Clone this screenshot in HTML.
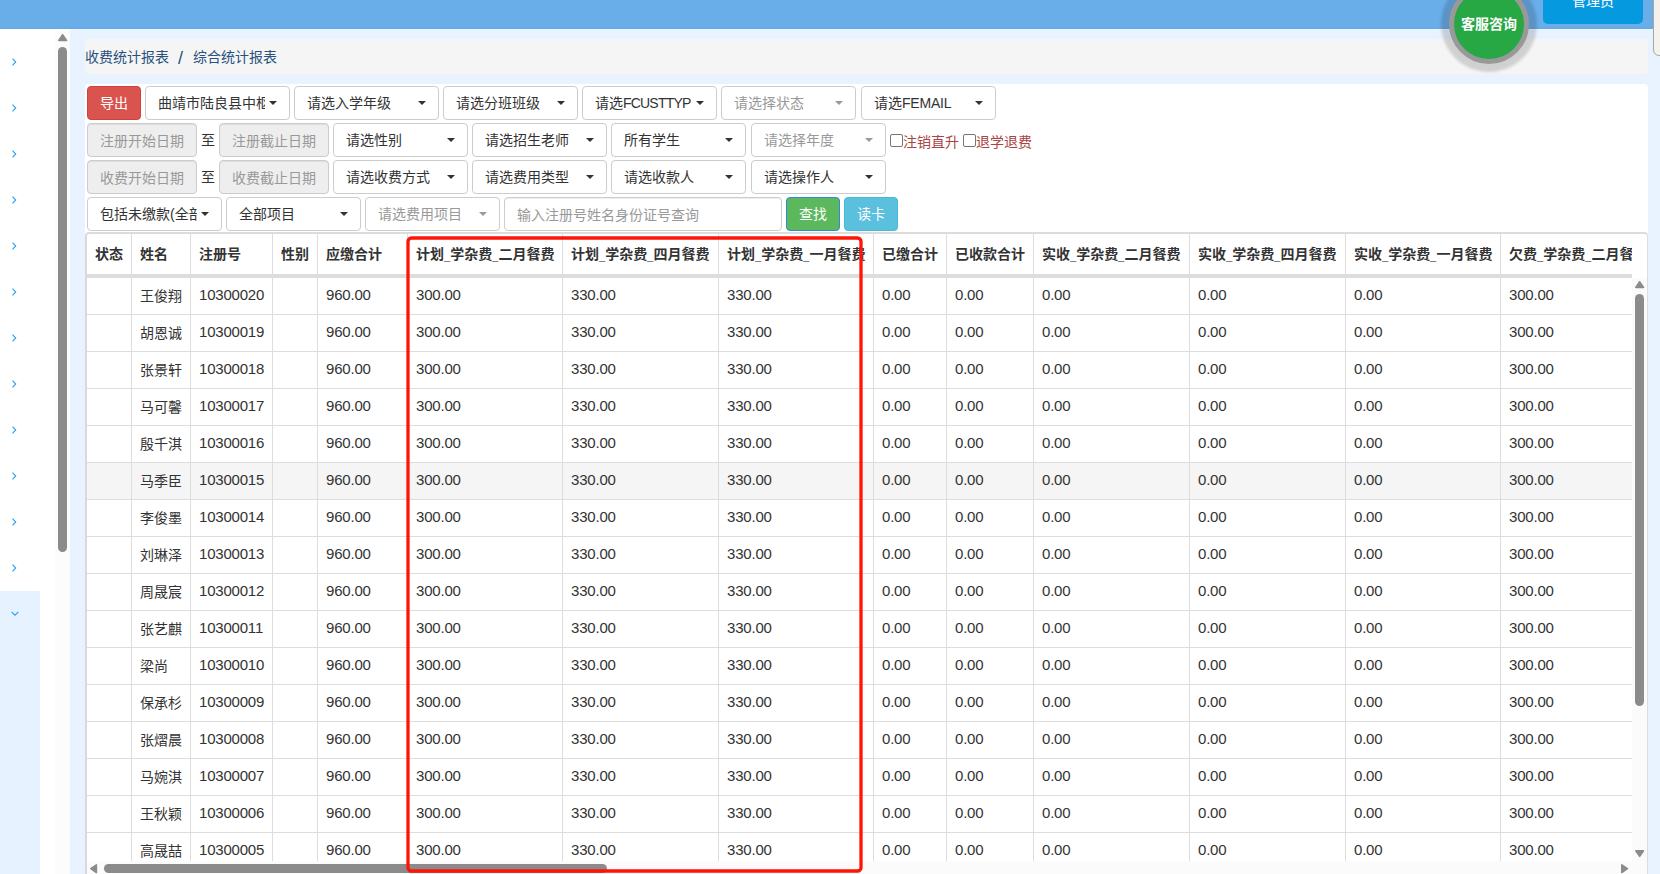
<!DOCTYPE html><html lang="zh-CN"><head><meta charset="utf-8"><title>综合统计报表</title><style>
*{box-sizing:border-box;margin:0;padding:0}
html,body{width:1660px;height:874px;overflow:hidden}
body{position:relative;background:#e8f3ff;font-family:"Liberation Sans","Noto Sans CJK SC",sans-serif;font-size:14px;line-height:20px;color:#333}
.abs{position:absolute}
#hdr{left:0;top:0;width:1660px;height:30px;background:linear-gradient(#6aaee9 0,#6aaee9 27px,#64aae7 28px,#64aae7 29px,#eff7ff 29px,#eff7ff 30px)}
#side{left:0;top:29px;width:70px;height:845px;background:#fff}
#side .act{left:0;top:562px;width:40px;height:284px;background:#e6f2ff}
#strack{left:55px;top:30px;width:15px;height:844px;background:#fcfcfc}
.thumb{background:#8b8b8b;border-radius:5px}
.chev{left:11px;width:8px;height:10px}
#bc{left:85px;top:39px;width:1563px;height:35px;background:#f5f5f5;border-radius:4px;color:#28527e;padding:8px 0 0 0;line-height:20px}
#bc span{position:absolute;top:8px;white-space:nowrap}
#panel{left:85px;top:84px;width:1563px;height:790px;background:#fff;border-radius:4px 4px 0 0}
.btn{position:absolute;height:34px;border:1px solid #ccc;border-radius:4px;background:#fff;padding:6px 0 0 12px;white-space:nowrap;overflow:hidden;color:#333}
.btn .t{display:block;overflow:hidden;white-space:nowrap}
.btn.ph{color:#999}
.btn i{position:absolute;right:12px;top:14px;width:0;height:0;border-top:4px solid #333;border-left:4px solid transparent;border-right:4px solid transparent}
.btn.ph i{border-top-color:#999}
.inp{position:absolute;height:34px;border:1px solid #ccc;border-radius:4px;background:#eee;padding:7px 0 0 12px;color:#999;white-space:nowrap;box-shadow:inset 0 1px 1px rgba(0,0,0,.075)}
.cb{position:absolute;width:13px;height:13px;border:1px solid #767676;border-radius:2px;background:#fff}
.lbl{position:absolute;color:#a94442;white-space:nowrap}
.sol{position:absolute;height:34px;border-radius:4px;color:#fff;text-align:center;padding-top:6px;border:1px solid}
#tbl{left:85px;top:232px;width:1563px;height:642px;border-left:2px solid #d9d9d9;border-top:2px solid #dcdcdc;border-right:1px solid #ddd;border-radius:4px 4px 0 0;overflow:hidden;background:#fff}
#tin{position:absolute;left:0;top:0;width:1545px;height:627px;overflow:hidden}
.vl{position:absolute;top:0;width:1px;height:627px;background:#ddd}
.hl{position:absolute;left:0;width:1545px;height:1px;background:#ddd}
.th{position:absolute;top:10px;font-weight:bold;white-space:nowrap;line-height:20px}
.td{position:absolute;white-space:nowrap;line-height:20px}
.num{font-size:15px;letter-spacing:-.2px;margin-top:-1px}
.u{display:inline-block;width:6.3px;transform:scaleX(.8);transform-origin:0 0;position:relative;top:1px}
#red{left:400px;top:230px}
#kf{left:1449px;top:-16px;width:80px;height:80px;border-radius:50%;background:#28a745;border:5px solid #999;box-shadow:0 0 3px 8px rgba(0,0,0,.15);color:#fff;font-weight:bold;font-size:14px;text-align:center;line-height:70px;padding-top:0}
#mgr{left:1543px;top:-14px;width:100px;height:38px;background:#0599e0;border-radius:5px;color:#fff;text-align:center;font-size:14px;line-height:20px;padding-top:5px}
#beige{left:1653px;top:-5px;width:14px;height:60.5px;background:#f5f1ec;border:1px solid #a9a6a2;border-radius:0 0 0 6px}
</style></head><body>
<div id="hdr" class="abs"></div>
<div id="side" class="abs"><div class="abs act"></div></div>
<div id="strack" class="abs"></div>
<svg class="abs" style="left:57.85px;top:33.9px" width="10" height="8" viewBox="0 0 10 8"><path d="M4.65 .8 L8.5 6.4 L.8 6.4 Z" fill="#8b8b8b" stroke="#8b8b8b" stroke-width="1.6" stroke-linejoin="round"/></svg>
<div class="abs thumb" style="left:58px;top:47px;width:9px;height:505px"></div>
<svg class="abs chev" style="top:56.5px" viewBox="0 0 8 10"><path d="M1.5 1.7 L4.7 5 L1.5 8.3" fill="none" stroke="#2a9df4" stroke-width="1.1"/></svg>
<svg class="abs chev" style="top:102.5px" viewBox="0 0 8 10"><path d="M1.5 1.7 L4.7 5 L1.5 8.3" fill="none" stroke="#2a9df4" stroke-width="1.1"/></svg>
<svg class="abs chev" style="top:148.5px" viewBox="0 0 8 10"><path d="M1.5 1.7 L4.7 5 L1.5 8.3" fill="none" stroke="#2a9df4" stroke-width="1.1"/></svg>
<svg class="abs chev" style="top:194.5px" viewBox="0 0 8 10"><path d="M1.5 1.7 L4.7 5 L1.5 8.3" fill="none" stroke="#2a9df4" stroke-width="1.1"/></svg>
<svg class="abs chev" style="top:240.5px" viewBox="0 0 8 10"><path d="M1.5 1.7 L4.7 5 L1.5 8.3" fill="none" stroke="#2a9df4" stroke-width="1.1"/></svg>
<svg class="abs chev" style="top:286.5px" viewBox="0 0 8 10"><path d="M1.5 1.7 L4.7 5 L1.5 8.3" fill="none" stroke="#2a9df4" stroke-width="1.1"/></svg>
<svg class="abs chev" style="top:332.5px" viewBox="0 0 8 10"><path d="M1.5 1.7 L4.7 5 L1.5 8.3" fill="none" stroke="#2a9df4" stroke-width="1.1"/></svg>
<svg class="abs chev" style="top:378.5px" viewBox="0 0 8 10"><path d="M1.5 1.7 L4.7 5 L1.5 8.3" fill="none" stroke="#2a9df4" stroke-width="1.1"/></svg>
<svg class="abs chev" style="top:424.5px" viewBox="0 0 8 10"><path d="M1.5 1.7 L4.7 5 L1.5 8.3" fill="none" stroke="#2a9df4" stroke-width="1.1"/></svg>
<svg class="abs chev" style="top:470.5px" viewBox="0 0 8 10"><path d="M1.5 1.7 L4.7 5 L1.5 8.3" fill="none" stroke="#2a9df4" stroke-width="1.1"/></svg>
<svg class="abs chev" style="top:516.5px" viewBox="0 0 8 10"><path d="M1.5 1.7 L4.7 5 L1.5 8.3" fill="none" stroke="#2a9df4" stroke-width="1.1"/></svg>
<svg class="abs chev" style="top:562.5px" viewBox="0 0 8 10"><path d="M1.5 1.7 L4.7 5 L1.5 8.3" fill="none" stroke="#2a9df4" stroke-width="1.1"/></svg>
<svg class="abs" style="left:9.65px;top:609.3px" width="10" height="8" viewBox="0 0 10 8"><path d="M1.6 2.8 L5 6.2 L8.4 2.8" fill="none" stroke="#2a9df4" stroke-width="1.1"/></svg>
<div id="bc" class="abs"><span style="left:0">收费统计报表</span><span style="left:93px;font-size:18px;top:9px">/</span><span style="left:108px">综合统计报表</span></div>
<div id="panel" class="abs"></div>
<div class="sol" style="left:87px;top:86px;width:54px;background:#d9534f;border-color:#d43f3a">导出</div>
<div class="btn" style="left:145px;top:86px;width:145px"><span class="t" style="width:107px">曲靖市陆良县中枢镇</span><i></i></div>
<div class="btn" style="left:294px;top:86px;width:145px"><span class="t" style="width:107px">请选入学年级</span><i></i></div>
<div class="btn" style="left:443px;top:86px;width:135px"><span class="t" style="width:97px">请选分班班级</span><i></i></div>
<div class="btn" style="left:582px;top:86px;width:135px"><span class="t" style="width:97px">请选<span style="letter-spacing:-.8px">FCUSTTYP</span></span><i></i></div>
<div class="btn ph" style="left:721px;top:86px;width:135px"><span class="t" style="width:97px">请选择状态</span><i></i></div>
<div class="btn" style="left:861px;top:86px;width:135px"><span class="t" style="width:97px">请选<span style="letter-spacing:-.2px">FEMAIL</span></span><i></i></div>
<div class="inp" style="left:87px;top:123px;width:110px;background:#eee">注册开始日期</div>
<div class="abs" style="left:201px;top:130px">至</div>
<div class="inp" style="left:219px;top:123px;width:110px;background:#eee">注册截止日期</div>
<div class="btn" style="left:333px;top:123px;width:135px"><span class="t" style="width:97px">请选性别</span><i></i></div>
<div class="btn" style="left:472px;top:123px;width:135px"><span class="t" style="width:97px">请选招生老师</span><i></i></div>
<div class="btn" style="left:611px;top:123px;width:135px"><span class="t" style="width:97px">所有学生</span><i></i></div>
<div class="btn ph" style="left:751px;top:123px;width:135px"><span class="t" style="width:97px">请选择年度</span><i></i></div>
<div class="cb" style="left:890px;top:134px"></div><div class="lbl" style="left:903px;top:132px">注销直升</div>
<div class="cb" style="left:963px;top:134px"></div><div class="lbl" style="left:976px;top:132px">退学退费</div>
<div class="inp" style="left:87px;top:160px;width:110px;background:#eee">收费开始日期</div>
<div class="abs" style="left:201px;top:167px">至</div>
<div class="inp" style="left:219px;top:160px;width:110px;background:#eee">收费截止日期</div>
<div class="btn" style="left:333px;top:160px;width:135px"><span class="t" style="width:97px">请选收费方式</span><i></i></div>
<div class="btn" style="left:472px;top:160px;width:135px"><span class="t" style="width:97px">请选费用类型</span><i></i></div>
<div class="btn" style="left:611px;top:160px;width:135px"><span class="t" style="width:97px">请选收款人</span><i></i></div>
<div class="btn" style="left:751px;top:160px;width:135px"><span class="t" style="width:97px">请选操作人</span><i></i></div>
<div class="btn" style="left:87px;top:197px;width:135px"><span class="t" style="width:97px">包括未缴款(全部)</span><i></i></div>
<div class="btn" style="left:226px;top:197px;width:135px"><span class="t" style="width:97px">全部项目</span><i></i></div>
<div class="btn ph" style="left:365px;top:197px;width:135px"><span class="t" style="width:97px">请选费用项目</span><i></i></div>
<div class="inp" style="left:504px;top:197px;width:278px;background:#fff">输入注册号姓名身份证号查询</div>
<div class="sol" style="left:786px;top:197px;width:54px;background:#5cb85c;border-color:#2e8bd6">查找</div>
<div class="sol" style="left:844px;top:197px;width:54px;background:#5bc0de;border-color:#46b8da">读卡</div>
<div id="tbl" class="abs"><div id="tin">
<div class="abs" style="left:0;top:229px;width:1545px;height:36px;background:#f5f5f5"></div>
<div class="vl" style="left:44px"></div>
<div class="vl" style="left:103px"></div>
<div class="vl" style="left:185px"></div>
<div class="vl" style="left:230px"></div>
<div class="vl" style="left:320px"></div>
<div class="vl" style="left:475px"></div>
<div class="vl" style="left:631px"></div>
<div class="vl" style="left:786px"></div>
<div class="vl" style="left:859px"></div>
<div class="vl" style="left:946px"></div>
<div class="vl" style="left:1102px"></div>
<div class="vl" style="left:1258px"></div>
<div class="vl" style="left:1413px"></div>
<div class="hl" style="top:40px;height:4px"></div>
<div class="hl" style="top:80px"></div>
<div class="hl" style="top:117px"></div>
<div class="hl" style="top:154px"></div>
<div class="hl" style="top:191px"></div>
<div class="hl" style="top:228px"></div>
<div class="hl" style="top:265px"></div>
<div class="hl" style="top:302px"></div>
<div class="hl" style="top:339px"></div>
<div class="hl" style="top:376px"></div>
<div class="hl" style="top:413px"></div>
<div class="hl" style="top:450px"></div>
<div class="hl" style="top:487px"></div>
<div class="hl" style="top:524px"></div>
<div class="hl" style="top:561px"></div>
<div class="hl" style="top:598px"></div>
<div class="hl" style="top:635px"></div>
<div class="th" style="left:8px">状态</div>
<div class="th" style="left:53px">姓名</div>
<div class="th" style="left:112px">注册号</div>
<div class="th" style="left:194px">性别</div>
<div class="th" style="left:239px">应缴合计</div>
<div class="th" style="left:329px">计划<span class="u">_</span>学杂费<span class="u">_</span>二月餐费</div>
<div class="th" style="left:484px">计划<span class="u">_</span>学杂费<span class="u">_</span>四月餐费</div>
<div class="th" style="left:640px">计划<span class="u">_</span>学杂费<span class="u">_</span>一月餐费</div>
<div class="th" style="left:795px">已缴合计</div>
<div class="th" style="left:868px">已收款合计</div>
<div class="th" style="left:955px">实收<span class="u">_</span>学杂费<span class="u">_</span>二月餐费</div>
<div class="th" style="left:1111px">实收<span class="u">_</span>学杂费<span class="u">_</span>四月餐费</div>
<div class="th" style="left:1267px">实收<span class="u">_</span>学杂费<span class="u">_</span>一月餐费</div>
<div class="th" style="left:1422px">欠费<span class="u">_</span>学杂费<span class="u">_</span>二月餐费</div>
<div class="td" style="left:53px;top:52px">王俊翔</div>
<div class="td num" style="left:112px;top:52px">10300020</div>
<div class="td num" style="left:239px;top:52px">960.00</div>
<div class="td num" style="left:329px;top:52px">300.00</div>
<div class="td num" style="left:484px;top:52px">330.00</div>
<div class="td num" style="left:640px;top:52px">330.00</div>
<div class="td num" style="left:795px;top:52px">0.00</div>
<div class="td num" style="left:868px;top:52px">0.00</div>
<div class="td num" style="left:955px;top:52px">0.00</div>
<div class="td num" style="left:1111px;top:52px">0.00</div>
<div class="td num" style="left:1267px;top:52px">0.00</div>
<div class="td num" style="left:1422px;top:52px">300.00</div>
<div class="td" style="left:53px;top:89px">胡恩诚</div>
<div class="td num" style="left:112px;top:89px">10300019</div>
<div class="td num" style="left:239px;top:89px">960.00</div>
<div class="td num" style="left:329px;top:89px">300.00</div>
<div class="td num" style="left:484px;top:89px">330.00</div>
<div class="td num" style="left:640px;top:89px">330.00</div>
<div class="td num" style="left:795px;top:89px">0.00</div>
<div class="td num" style="left:868px;top:89px">0.00</div>
<div class="td num" style="left:955px;top:89px">0.00</div>
<div class="td num" style="left:1111px;top:89px">0.00</div>
<div class="td num" style="left:1267px;top:89px">0.00</div>
<div class="td num" style="left:1422px;top:89px">300.00</div>
<div class="td" style="left:53px;top:126px">张景轩</div>
<div class="td num" style="left:112px;top:126px">10300018</div>
<div class="td num" style="left:239px;top:126px">960.00</div>
<div class="td num" style="left:329px;top:126px">300.00</div>
<div class="td num" style="left:484px;top:126px">330.00</div>
<div class="td num" style="left:640px;top:126px">330.00</div>
<div class="td num" style="left:795px;top:126px">0.00</div>
<div class="td num" style="left:868px;top:126px">0.00</div>
<div class="td num" style="left:955px;top:126px">0.00</div>
<div class="td num" style="left:1111px;top:126px">0.00</div>
<div class="td num" style="left:1267px;top:126px">0.00</div>
<div class="td num" style="left:1422px;top:126px">300.00</div>
<div class="td" style="left:53px;top:163px">马可馨</div>
<div class="td num" style="left:112px;top:163px">10300017</div>
<div class="td num" style="left:239px;top:163px">960.00</div>
<div class="td num" style="left:329px;top:163px">300.00</div>
<div class="td num" style="left:484px;top:163px">330.00</div>
<div class="td num" style="left:640px;top:163px">330.00</div>
<div class="td num" style="left:795px;top:163px">0.00</div>
<div class="td num" style="left:868px;top:163px">0.00</div>
<div class="td num" style="left:955px;top:163px">0.00</div>
<div class="td num" style="left:1111px;top:163px">0.00</div>
<div class="td num" style="left:1267px;top:163px">0.00</div>
<div class="td num" style="left:1422px;top:163px">300.00</div>
<div class="td" style="left:53px;top:200px">殷千淇</div>
<div class="td num" style="left:112px;top:200px">10300016</div>
<div class="td num" style="left:239px;top:200px">960.00</div>
<div class="td num" style="left:329px;top:200px">300.00</div>
<div class="td num" style="left:484px;top:200px">330.00</div>
<div class="td num" style="left:640px;top:200px">330.00</div>
<div class="td num" style="left:795px;top:200px">0.00</div>
<div class="td num" style="left:868px;top:200px">0.00</div>
<div class="td num" style="left:955px;top:200px">0.00</div>
<div class="td num" style="left:1111px;top:200px">0.00</div>
<div class="td num" style="left:1267px;top:200px">0.00</div>
<div class="td num" style="left:1422px;top:200px">300.00</div>
<div class="td" style="left:53px;top:237px">马季臣</div>
<div class="td num" style="left:112px;top:237px">10300015</div>
<div class="td num" style="left:239px;top:237px">960.00</div>
<div class="td num" style="left:329px;top:237px">300.00</div>
<div class="td num" style="left:484px;top:237px">330.00</div>
<div class="td num" style="left:640px;top:237px">330.00</div>
<div class="td num" style="left:795px;top:237px">0.00</div>
<div class="td num" style="left:868px;top:237px">0.00</div>
<div class="td num" style="left:955px;top:237px">0.00</div>
<div class="td num" style="left:1111px;top:237px">0.00</div>
<div class="td num" style="left:1267px;top:237px">0.00</div>
<div class="td num" style="left:1422px;top:237px">300.00</div>
<div class="td" style="left:53px;top:274px">李俊墨</div>
<div class="td num" style="left:112px;top:274px">10300014</div>
<div class="td num" style="left:239px;top:274px">960.00</div>
<div class="td num" style="left:329px;top:274px">300.00</div>
<div class="td num" style="left:484px;top:274px">330.00</div>
<div class="td num" style="left:640px;top:274px">330.00</div>
<div class="td num" style="left:795px;top:274px">0.00</div>
<div class="td num" style="left:868px;top:274px">0.00</div>
<div class="td num" style="left:955px;top:274px">0.00</div>
<div class="td num" style="left:1111px;top:274px">0.00</div>
<div class="td num" style="left:1267px;top:274px">0.00</div>
<div class="td num" style="left:1422px;top:274px">300.00</div>
<div class="td" style="left:53px;top:311px">刘琳泽</div>
<div class="td num" style="left:112px;top:311px">10300013</div>
<div class="td num" style="left:239px;top:311px">960.00</div>
<div class="td num" style="left:329px;top:311px">300.00</div>
<div class="td num" style="left:484px;top:311px">330.00</div>
<div class="td num" style="left:640px;top:311px">330.00</div>
<div class="td num" style="left:795px;top:311px">0.00</div>
<div class="td num" style="left:868px;top:311px">0.00</div>
<div class="td num" style="left:955px;top:311px">0.00</div>
<div class="td num" style="left:1111px;top:311px">0.00</div>
<div class="td num" style="left:1267px;top:311px">0.00</div>
<div class="td num" style="left:1422px;top:311px">300.00</div>
<div class="td" style="left:53px;top:348px">周晟宸</div>
<div class="td num" style="left:112px;top:348px">10300012</div>
<div class="td num" style="left:239px;top:348px">960.00</div>
<div class="td num" style="left:329px;top:348px">300.00</div>
<div class="td num" style="left:484px;top:348px">330.00</div>
<div class="td num" style="left:640px;top:348px">330.00</div>
<div class="td num" style="left:795px;top:348px">0.00</div>
<div class="td num" style="left:868px;top:348px">0.00</div>
<div class="td num" style="left:955px;top:348px">0.00</div>
<div class="td num" style="left:1111px;top:348px">0.00</div>
<div class="td num" style="left:1267px;top:348px">0.00</div>
<div class="td num" style="left:1422px;top:348px">300.00</div>
<div class="td" style="left:53px;top:385px">张艺麒</div>
<div class="td num" style="left:112px;top:385px">10300011</div>
<div class="td num" style="left:239px;top:385px">960.00</div>
<div class="td num" style="left:329px;top:385px">300.00</div>
<div class="td num" style="left:484px;top:385px">330.00</div>
<div class="td num" style="left:640px;top:385px">330.00</div>
<div class="td num" style="left:795px;top:385px">0.00</div>
<div class="td num" style="left:868px;top:385px">0.00</div>
<div class="td num" style="left:955px;top:385px">0.00</div>
<div class="td num" style="left:1111px;top:385px">0.00</div>
<div class="td num" style="left:1267px;top:385px">0.00</div>
<div class="td num" style="left:1422px;top:385px">300.00</div>
<div class="td" style="left:53px;top:422px">梁尚</div>
<div class="td num" style="left:112px;top:422px">10300010</div>
<div class="td num" style="left:239px;top:422px">960.00</div>
<div class="td num" style="left:329px;top:422px">300.00</div>
<div class="td num" style="left:484px;top:422px">330.00</div>
<div class="td num" style="left:640px;top:422px">330.00</div>
<div class="td num" style="left:795px;top:422px">0.00</div>
<div class="td num" style="left:868px;top:422px">0.00</div>
<div class="td num" style="left:955px;top:422px">0.00</div>
<div class="td num" style="left:1111px;top:422px">0.00</div>
<div class="td num" style="left:1267px;top:422px">0.00</div>
<div class="td num" style="left:1422px;top:422px">300.00</div>
<div class="td" style="left:53px;top:459px">保承杉</div>
<div class="td num" style="left:112px;top:459px">10300009</div>
<div class="td num" style="left:239px;top:459px">960.00</div>
<div class="td num" style="left:329px;top:459px">300.00</div>
<div class="td num" style="left:484px;top:459px">330.00</div>
<div class="td num" style="left:640px;top:459px">330.00</div>
<div class="td num" style="left:795px;top:459px">0.00</div>
<div class="td num" style="left:868px;top:459px">0.00</div>
<div class="td num" style="left:955px;top:459px">0.00</div>
<div class="td num" style="left:1111px;top:459px">0.00</div>
<div class="td num" style="left:1267px;top:459px">0.00</div>
<div class="td num" style="left:1422px;top:459px">300.00</div>
<div class="td" style="left:53px;top:496px">张熠晨</div>
<div class="td num" style="left:112px;top:496px">10300008</div>
<div class="td num" style="left:239px;top:496px">960.00</div>
<div class="td num" style="left:329px;top:496px">300.00</div>
<div class="td num" style="left:484px;top:496px">330.00</div>
<div class="td num" style="left:640px;top:496px">330.00</div>
<div class="td num" style="left:795px;top:496px">0.00</div>
<div class="td num" style="left:868px;top:496px">0.00</div>
<div class="td num" style="left:955px;top:496px">0.00</div>
<div class="td num" style="left:1111px;top:496px">0.00</div>
<div class="td num" style="left:1267px;top:496px">0.00</div>
<div class="td num" style="left:1422px;top:496px">300.00</div>
<div class="td" style="left:53px;top:533px">马婉淇</div>
<div class="td num" style="left:112px;top:533px">10300007</div>
<div class="td num" style="left:239px;top:533px">960.00</div>
<div class="td num" style="left:329px;top:533px">300.00</div>
<div class="td num" style="left:484px;top:533px">330.00</div>
<div class="td num" style="left:640px;top:533px">330.00</div>
<div class="td num" style="left:795px;top:533px">0.00</div>
<div class="td num" style="left:868px;top:533px">0.00</div>
<div class="td num" style="left:955px;top:533px">0.00</div>
<div class="td num" style="left:1111px;top:533px">0.00</div>
<div class="td num" style="left:1267px;top:533px">0.00</div>
<div class="td num" style="left:1422px;top:533px">300.00</div>
<div class="td" style="left:53px;top:570px">王秋颖</div>
<div class="td num" style="left:112px;top:570px">10300006</div>
<div class="td num" style="left:239px;top:570px">960.00</div>
<div class="td num" style="left:329px;top:570px">300.00</div>
<div class="td num" style="left:484px;top:570px">330.00</div>
<div class="td num" style="left:640px;top:570px">330.00</div>
<div class="td num" style="left:795px;top:570px">0.00</div>
<div class="td num" style="left:868px;top:570px">0.00</div>
<div class="td num" style="left:955px;top:570px">0.00</div>
<div class="td num" style="left:1111px;top:570px">0.00</div>
<div class="td num" style="left:1267px;top:570px">0.00</div>
<div class="td num" style="left:1422px;top:570px">300.00</div>
<div class="td" style="left:53px;top:607px">高晟喆</div>
<div class="td num" style="left:112px;top:607px">10300005</div>
<div class="td num" style="left:239px;top:607px">960.00</div>
<div class="td num" style="left:329px;top:607px">300.00</div>
<div class="td num" style="left:484px;top:607px">330.00</div>
<div class="td num" style="left:640px;top:607px">330.00</div>
<div class="td num" style="left:795px;top:607px">0.00</div>
<div class="td num" style="left:868px;top:607px">0.00</div>
<div class="td num" style="left:955px;top:607px">0.00</div>
<div class="td num" style="left:1111px;top:607px">0.00</div>
<div class="td num" style="left:1267px;top:607px">0.00</div>
<div class="td num" style="left:1422px;top:607px">300.00</div>
</div>
<div class="abs" style="left:1545px;top:44px;width:15px;height:583px;background:#fbfbfb"></div>
<svg class="abs" style="left:1547.9px;top:46.7px" width="10" height="8" viewBox="0 0 10 8"><path d="M4.65 .8 L8.5 6.4 L.8 6.4 Z" fill="#8b8b8b" stroke="#8b8b8b" stroke-width="1.6" stroke-linejoin="round"/></svg>
<div class="abs thumb" style="left:1548px;top:60px;width:9px;height:412px"></div>
<svg class="abs" style="left:1547.9px;top:616px" width="10" height="8" viewBox="0 0 10 8"><path d="M4.65 6.4 L8.5 .8 L.8 .8 Z" fill="#8b8b8b" stroke="#8b8b8b" stroke-width="1.6" stroke-linejoin="round"/></svg>
<div class="abs" style="left:0;top:627px;width:1560px;height:13px;background:#fbfbfb"></div>
<svg class="abs" style="left:3.3px;top:630px" width="8" height="10" viewBox="0 0 8 10"><path d="M.8 4.65 L6.4 8.5 L6.4 .8 Z" fill="#8b8b8b" stroke="#8b8b8b" stroke-width="1.6" stroke-linejoin="round"/></svg>
<div class="abs thumb" style="left:17px;top:630px;width:503px;height:9px"></div>
<svg class="abs" style="left:1533.8px;top:630px" width="8" height="10" viewBox="0 0 8 10"><path d="M6.4 4.65 L.8 8.5 L.8 .8 Z" fill="#8b8b8b" stroke="#8b8b8b" stroke-width="1.6" stroke-linejoin="round"/></svg>
</div>
<svg id="red" class="abs" width="470" height="644" viewBox="400 230 470 644"><rect x="408" y="238" width="453" height="633" rx="3.5" fill="none" stroke="#ff1408" stroke-width="3.3"/></svg>
<div id="mgr" class="abs">管理员</div>
<div id="kf" class="abs">客服咨询</div>
<div id="beige" class="abs"></div>
</body></html>
